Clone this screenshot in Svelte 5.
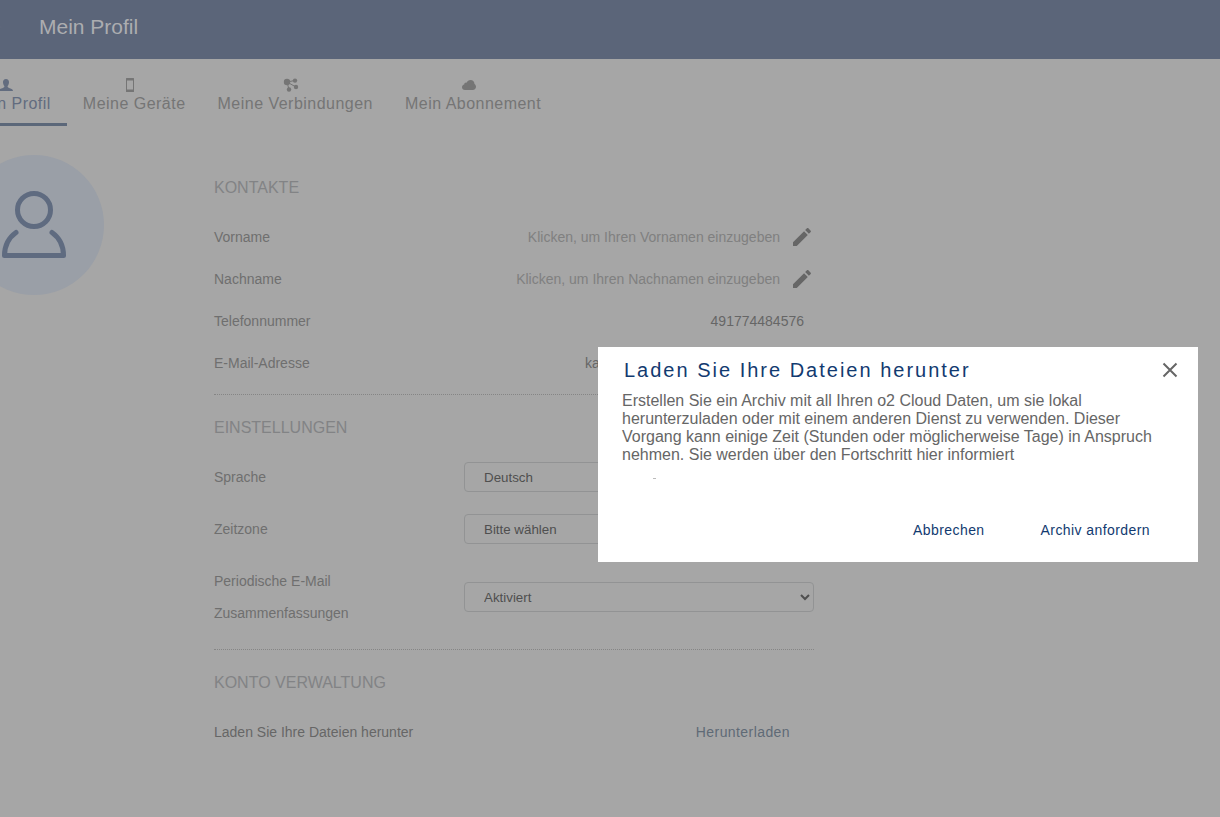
<script>
  const contacts = [
    { label: 'Vorname', value: 'Klicken, um Ihren Vornamen einzugeben', kind: 'edit' },
    { label: 'Nachname', value: 'Klicken, um Ihren Nachnamen einzugeben', kind: 'edit' },
    { label: 'Telefonnummer', value: '491774484576', kind: 'number' },
    { label: 'E-Mail-Adresse', value: 'ka', kind: 'mail' }
  ];

  const settings = [
    { id: 'language', label: 'Sprache', value: 'Deutsch' },
    { id: 'timezone', label: 'Zeitzone', value: 'Bitte wählen' },
    { id: 'digest', label: 'Periodische E-Mail Zusammenfassungen', value: 'Aktiviert', tall: true }
  ];
</script>

<header class="topbar">
  <svg class="back" width="6" height="10" viewBox="0 0 6 10" aria-hidden="true">
    <path d="M0 1l4 4-4 4" fill="none" stroke="currentColor" stroke-width="1" />
  </svg>
  <h1>Mein Profil</h1>
</header>

<div class="page">
  <nav class="tabs">
    <a class="tab active" href="#profil">
      <svg width="16" height="14" viewBox="0 0 16 14" aria-hidden="true">
        <path d="M8 1C5.900 1 4.900 2.500 5 4.500c.1 1.600.7 2.800 1.400 3.500.1 1-.4 1.500-1.400 1.900C3.200 10.500 1 10.900 1 13h14c0-2.100-2.200-2.500-4-3.100-1-.4-1.500-.9-1.400-1.900.7-.7 1.300-1.900 1.400-3.500C11.100 2.500 10.100 1 8 1z" fill="currentColor" />
      </svg>
      <span>Mein Profil</span>
    </a>
    <a class="tab" href="#geraete">
      <svg width="16" height="14" viewBox="0 0 16 14" aria-hidden="true">
        <path fill-rule="evenodd" d="M4.500 0h7q.5 0 .5.500v13q0 .5-.5.500h-7q-.5 0-.5-.5v-13q0-.5.500-.5zM5 2.500v9h6v-9z" fill="currentColor" />
      </svg>
      <span>Meine Geräte</span>
    </a>
    <a class="tab" href="#verbindungen">
      <svg width="16" height="14" viewBox="0 0 16 14" aria-hidden="true">
        <path d="M4 4l8-1.500M4 4l9 5M4 4l2 7.500" stroke="currentColor" stroke-width="1" />
        <circle cx="4" cy="4" r="3.200" fill="currentColor" />
        <circle cx="12" cy="2.600" r="2.200" fill="currentColor" />
        <circle cx="13" cy="9" r="2.200" fill="currentColor" />
        <circle cx="6" cy="11.500" r="2.200" fill="currentColor" />
      </svg>
      <span>Meine Verbindungen</span>
    </a>
    <a class="tab" href="#abonnement">
      <svg width="16" height="14" viewBox="0 0 16 14" aria-hidden="true">
        <path d="M4 12C2.200 12 1 10.700 1 9.200c0-1.400.9-2.400 2.200-2.700C3.200 5.200 4.500 4.300 5.700 4.700 6.400 3 7.700 2 9.500 2c2.200 0 3.900 1.600 4 3.900.9.600 1.500 1.600 1.500 2.800 0 1.900-1.400 3.300-3.200 3.300z" fill="currentColor" />
      </svg>
      <span>Mein Abonnement</span>
    </a>
  </nav>

  <main class="content">
    <div class="avatar">
      <svg width="68" height="70" viewBox="0 0 68 70" aria-hidden="true">
        <g fill="none" stroke="currentColor" stroke-width="5" stroke-linecap="round" stroke-linejoin="round">
          <circle cx="34" cy="20" r="16.500" />
          <path d="M16 42.500C9 47.500 4.500 56 4.500 65.500h59C63.500 56 59 47.500 52 42.500" />
        </g>
      </svg>
    </div>

    <div class="details">
      <section>
        <h2>KONTAKTE</h2>
        {#each contacts as c}
          <div class="row">
            <span class="label">{c.label}</span>
            <span class="value {c.kind}">{c.value}</span>
            {#if c.kind === 'edit'}
              <button class="pencil" aria-label="{c.label} bearbeiten">
                <svg width="24" height="24" viewBox="0 0 24 24" aria-hidden="true">
                  <path d="M3 17.250V21h3.750L17.810 9.940l-3.750-3.750L3 17.250zM20.710 7.040c.39-.39.39-1.020 0-1.410l-2.340-2.340c-.39-.39-1.020-.39-1.410 0l-1.830 1.830 3.750 3.750 1.830-1.830z" fill="currentColor" />
                </svg>
              </button>
            {/if}
          </div>
        {/each}
      </section>

      <section class="settings">
        <h2>EINSTELLUNGEN</h2>
        {#each settings as s}
          <div class="row" class:tall={s.tall}>
            <label for={s.id}>{s.label}</label>
            <select id={s.id}><option>{s.value}</option></select>
          </div>
        {/each}
      </section>

      <section>
        <h2>KONTO VERWALTUNG</h2>
        <div class="row">
          <span class="label strong">Laden Sie Ihre Dateien herunter</span>
          <button class="download">Herunterladen</button>
        </div>
      </section>
    </div>
  </main>
</div>

<div class="dialog" role="dialog" aria-labelledby="dialog-title">
  <div class="dialog-head">
    <h2 id="dialog-title">Laden Sie Ihre Dateien herunter</h2>
    <button class="close" aria-label="Schließen">
      <svg width="16" height="16" viewBox="0 0 16 16" aria-hidden="true">
        <path d="M1.500 1.500l13 13M14.500 1.500l-13 13" stroke="currentColor" stroke-width="2" />
      </svg>
    </button>
  </div>
  <p>
    Erstellen Sie ein Archiv mit all Ihren o2 Cloud Daten, um sie lokal herunterzuladen oder mit
    einem anderen Dienst zu verwenden. Dieser Vorgang kann einige Zeit (Stunden oder
    möglicherweise Tage) in Anspruch nehmen. Sie werden über den Fortschritt hier informiert
  </p>
  <div class="mark"></div>
  <div class="actions">
    <button>Abbrechen</button>
    <button>Archiv anfordern</button>
  </div>
</div>

<style>
  :global(body) {
    background: #a6a6a6;
    font-family: 'Liberation Sans', Arial, sans-serif;
    font-size: 14px;
    color: #6f6f6f;
    overflow-x: hidden;
  }

  h1,
  h2,
  p {
    margin: 0;
    font-weight: 400;
  }

  button {
    padding: 0;
    border: 0;
    background: none;
    font: inherit;
    color: inherit;
    cursor: pointer;
  }

  svg {
    display: block;
    flex: none;
  }

  .topbar {
    display: flex;
    align-items: center;
    gap: 35px;
    height: 59px;
    padding-bottom: 5px;
    box-sizing: border-box;
    background: #5b6579;
    color: #acadb0;
  }

  .topbar .back {
    width: 2px;
    color: #66707f;
  }

  h1 {
    padding-left: 2px;
    font-size: 21px;
    line-height: 24px;
  }

  .page {
    margin-left: -46px;
  }

  .tabs {
    display: flex;
  }

  .tab {
    display: flex;
    flex-direction: column;
    align-items: center;
    box-sizing: border-box;
    height: 67px;
    padding: 19px 16px 0;
    border-bottom: 3px solid transparent;
    font-size: 16px;
    line-height: 24px;
    letter-spacing: 0.03em;
    color: #757575;
    text-decoration: none;
  }

  .tab svg {
    margin-right: 8px;
  }

  .tab.active {
    border-color: #5b6779;
    color: #626c7f;
  }

  .content {
    display: flex;
    gap: 110px;
    padding: 29px 10px 24px;
  }

  .avatar {
    display: flex;
    flex: none;
    align-items: center;
    justify-content: center;
    width: 140px;
    height: 140px;
    border-radius: 50%;
    background: #9a9fa7;
    color: #5f6b80;
  }

  .details {
    flex: 0 1 600px;
  }

  section {
    padding: 23px 0 10px;
    border-bottom: 1px dotted #858585;
  }

  section:last-child {
    border: 0;
  }

  section h2 {
    margin-bottom: 18px;
    font-size: 16px;
    line-height: 20px;
    color: #828385;
  }

  .settings h2 {
    margin-bottom: 13px;
  }

  .row {
    display: flex;
    align-items: center;
    min-height: 42px;
  }

  .label {
    flex: 1;
  }

  .strong {
    color: #666;
  }

  .value {
    color: #666;
  }

  .edit {
    margin-right: 10px;
    color: #808080;
  }

  .number {
    padding-right: 10px;
  }

  .mail {
    width: 229px;
  }

  .pencil {
    color: #666;
  }

  .settings .row {
    min-height: 52px;
  }

  .settings .tall {
    padding: 10px 0;
  }

  label {
    flex: none;
    width: 160px;
    margin-right: 90px;
    line-height: 32px;
  }

  select {
    flex: 1;
    height: 30px;
    padding: 0 0 0 15px;
    border: 1px solid #929394;
    border-radius: 4px;
    background-color: transparent;
    font-family: inherit;
    color: #4f4f4f;
  }

  .download {
    margin-right: 24px;
    letter-spacing: 0.03em;
    color: #5f6a76;
  }

  .dialog {
    position: fixed;
    top: 347px;
    right: 22px;
    box-sizing: border-box;
    width: 600px;
    padding: 11px 24px 20px;
    background: #fff;
    color: #666;
  }

  .dialog-head {
    display: flex;
    align-items: center;
    justify-content: space-between;
    padding: 0 4px 0 2px;
    margin: 0 -8px 10px 0;
  }

  .dialog h2 {
    font-size: 20px;
    line-height: 24px;
    letter-spacing: 2px;
    color: #123a70;
  }

  .dialog p {
    font-size: 16px;
    line-height: 18px;
  }

  .mark {
    width: 3px;
    height: 1px;
    margin: 14px 0 0 31px;
    background: #bbb;
  }

  .actions {
    display: flex;
    justify-content: flex-end;
    gap: 56px;
    padding-right: 24px;
    margin-top: 39px;
    line-height: 24px;
    letter-spacing: 0.03em;
    color: #123a70;
  }

  .actions button {
    letter-spacing: inherit;
  }
</style>
